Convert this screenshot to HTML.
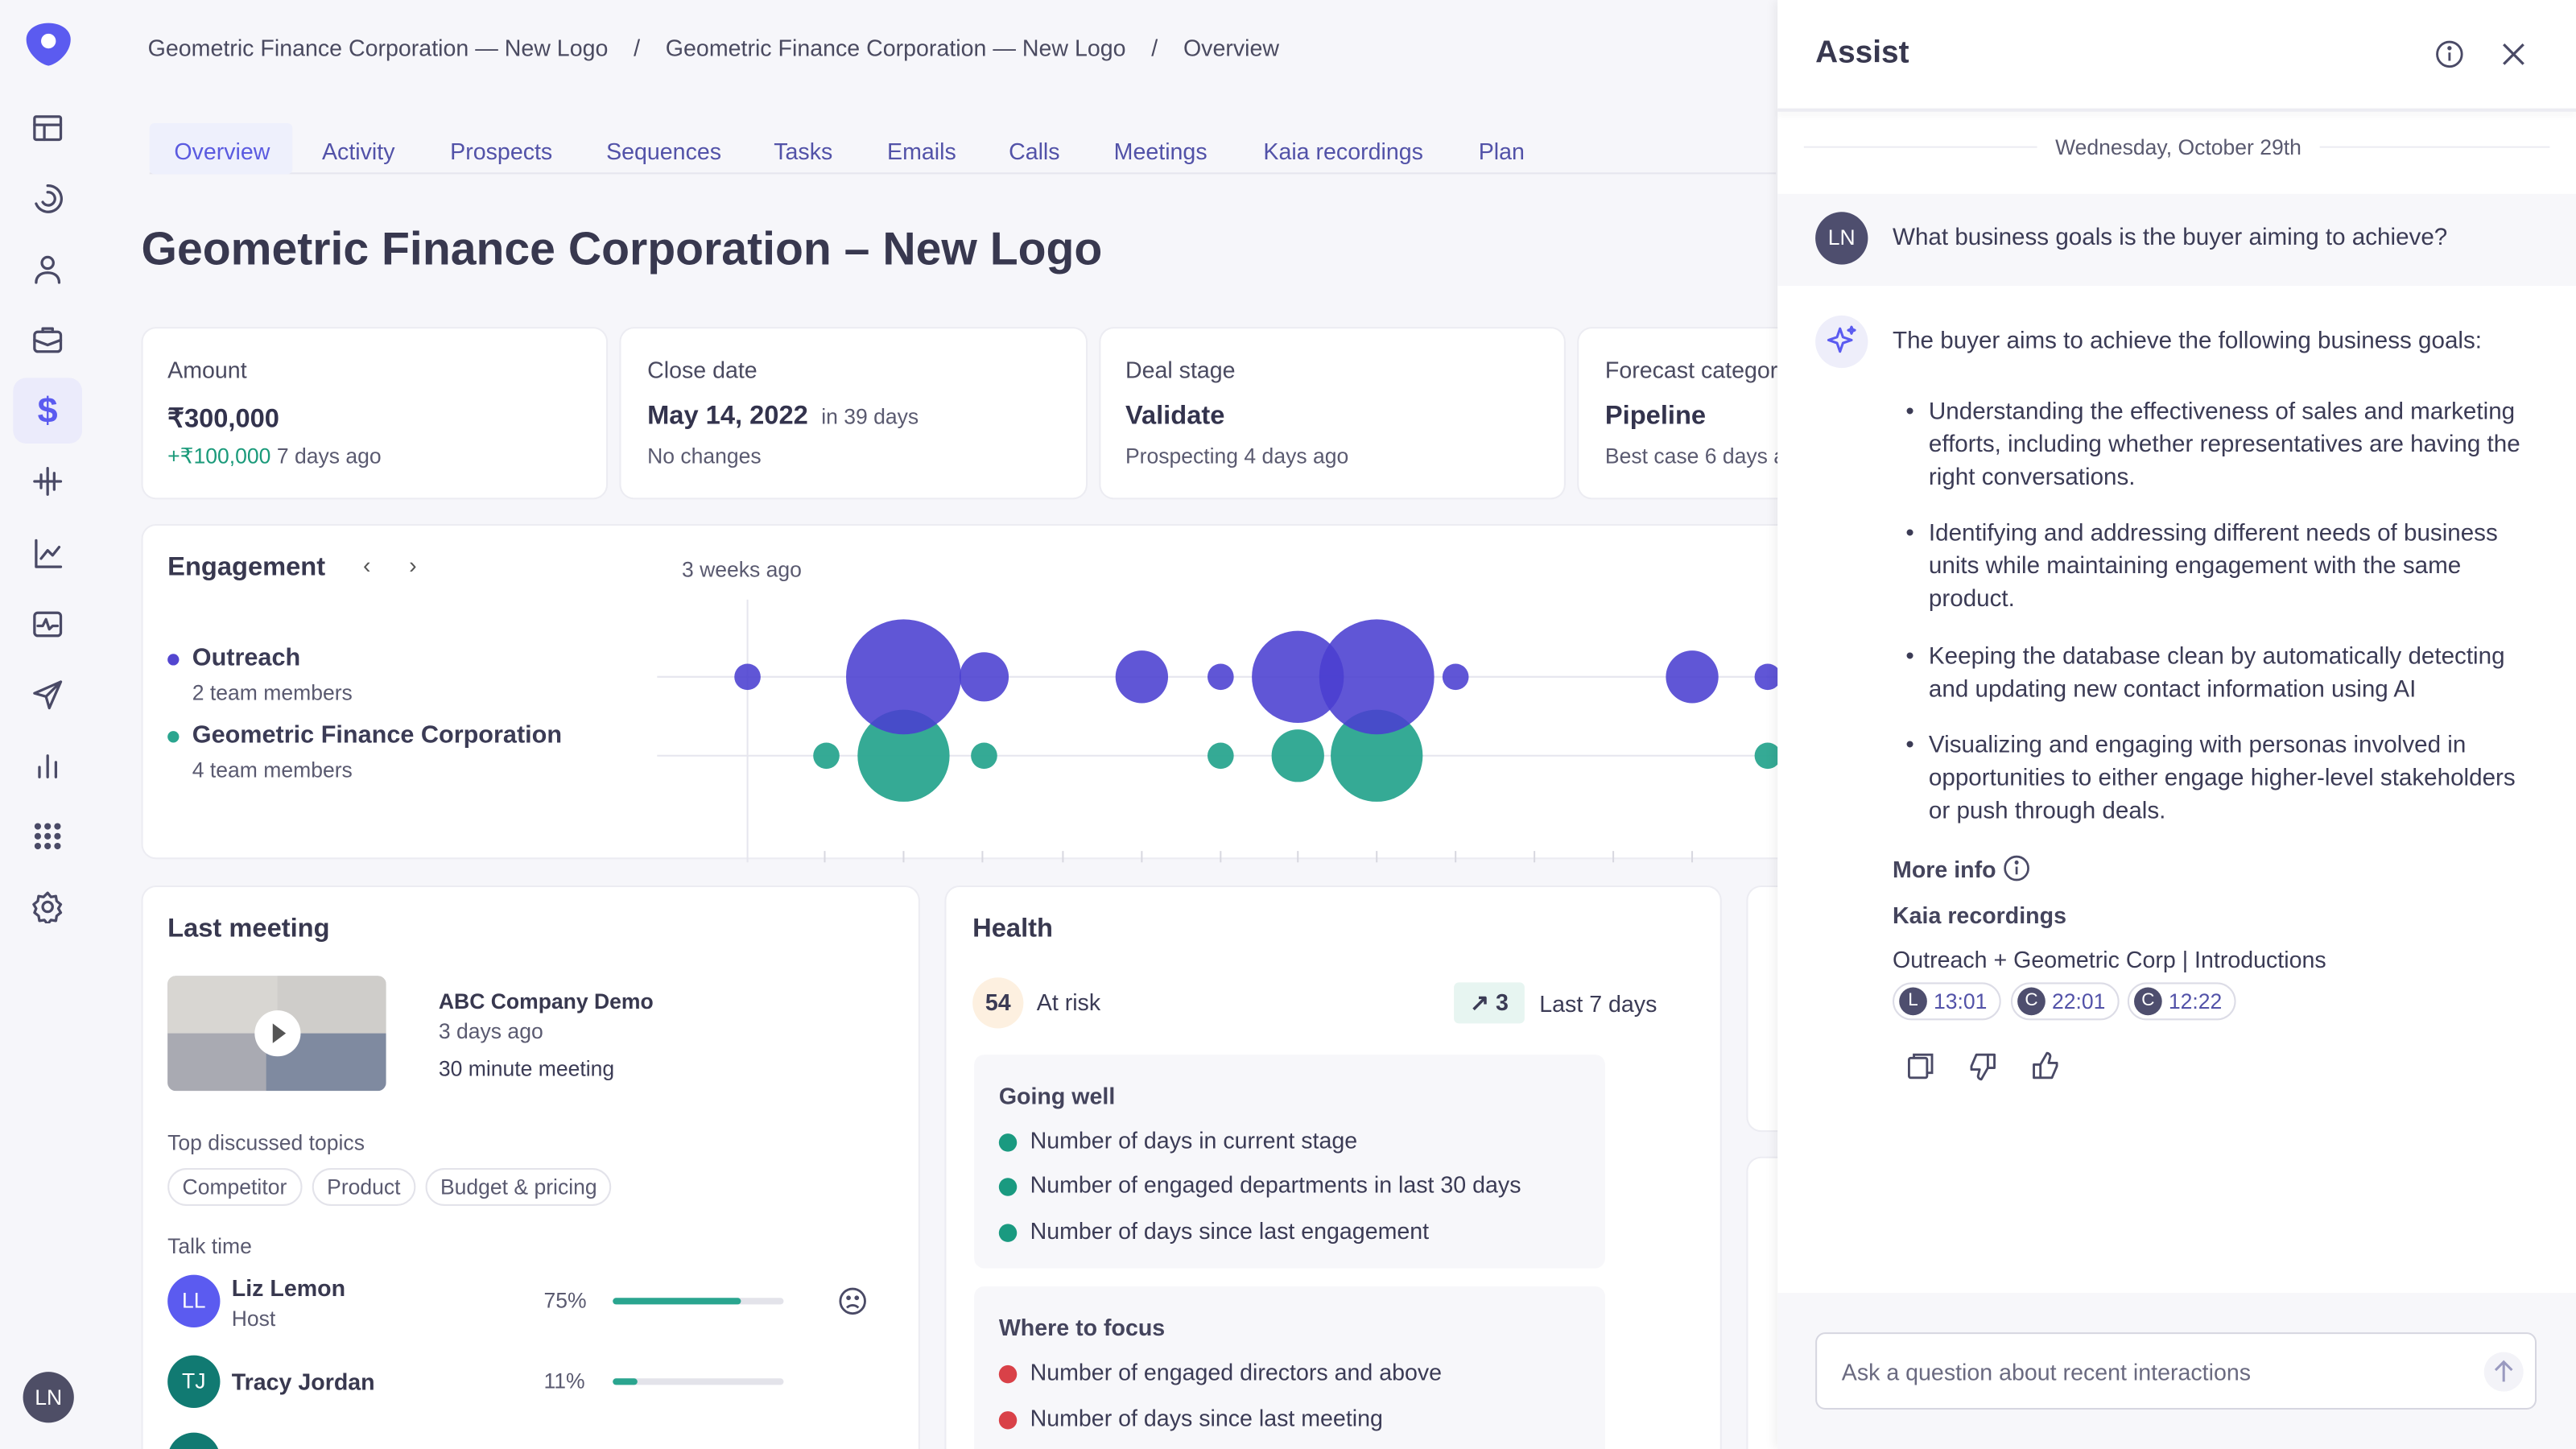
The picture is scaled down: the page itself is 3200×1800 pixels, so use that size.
<!DOCTYPE html>
<html><head><meta charset="utf-8"><style>
*{box-sizing:border-box;margin:0;padding:0}
body{width:3200px;height:1800px;overflow:hidden;background:#f6f6fa;font-family:"Liberation Sans",sans-serif;color:#3b3b55}
#w{position:absolute;left:0;top:0;width:1568px;height:882px;transform:scale(2.04082);transform-origin:0 0;overflow:hidden;background:#f6f6fa}
.a{position:absolute}
.card{position:absolute;background:#fff;border-radius:8px;box-shadow:0 0 0 1px #ececf2}
.ic{position:absolute;left:19px;width:20px;height:20px}
.ic svg{width:20px;height:20px;fill:none;stroke:#4a4a66;stroke-width:1.6;stroke-linecap:round;stroke-linejoin:round}
.tab{position:absolute;top:84px;font-size:14px;color:#5252a8}
.lbl{font-size:14px;color:#4a4a60}
.big{font-size:16px;font-weight:bold;color:#33334d}
.sm{font-size:13px;color:#5a5a70}
.dot{position:absolute;border-radius:50%}
.pill{position:absolute;border:1px solid #e3e3ea;border-radius:12px;font-size:13px;color:#5a5a70;height:23px;line-height:21px;padding:0 8px}
.li{position:absolute;font-size:14px;color:#3b3b55}
.li i{position:absolute;left:-19px;top:4px;width:11px;height:11px;border-radius:50%}
.chip{position:absolute;top:598px;height:23px;border:1px solid #dcdce6;border-radius:12px;font-size:13px;color:#5252a8;padding:0 7px 0 24px;line-height:21px}
.chip b{position:absolute;left:3px;top:2px;width:17px;height:17px;border-radius:50%;background:#4e4e6e;color:#fff;font-weight:normal;font-size:11px;text-align:center;line-height:17px}
</style></head><body><div id="w">
<!-- sidebar -->
<svg class="a" style="left:15px;top:13px" width="29" height="28" viewBox="0 0 29 28"><path d="M14.5 1C22 1 28 5 28 11c0 8-8 15-13.5 16C9 26 1 19 1 11 1 5 7 1 14.5 1z" fill="#5b5bf0"/><circle cx="14.5" cy="12" r="4.5" fill="#fff"/></svg>
<div class="ic" style="top:68px"><svg viewBox="0 0 20 20"><rect x="2" y="3" width="16" height="14" rx="1"/><path d="M2 8h16M8 8v9"/></svg></div>
<div class="ic" style="top:111px"><svg viewBox="0 0 20 20"><path d="M10 2a8 8 0 1 1-7 11M10 6a4 4 0 1 1-3 6"/></svg></div>
<div class="ic" style="top:154px"><svg viewBox="0 0 20 20"><circle cx="10" cy="6" r="3.5"/><path d="M3 18c0-4 3-6 7-6s7 2 7 6"/></svg></div>
<div class="ic" style="top:197px"><svg viewBox="0 0 20 20"><rect x="2" y="5" width="16" height="12" rx="2"/><path d="M7 5V3h6v2M2 10l8 3 8-3"/></svg></div>
<div class="a" style="left:8px;top:230px;width:42px;height:40px;background:#ebebfb;border-radius:8px;color:#5b5bf0;font-size:22px;font-weight:bold;text-align:center;line-height:40px">$</div>
<div class="ic" style="top:283px"><svg viewBox="0 0 20 20"><path d="M2 10h16M6 6v8M10 2v16M14 5v10"/></svg></div>
<div class="ic" style="top:327px"><svg viewBox="0 0 20 20"><path d="M3 2v16h15M6 13l4-5 3 3 4-5"/></svg></div>
<div class="ic" style="top:370px"><svg viewBox="0 0 20 20"><rect x="2" y="3" width="16" height="14" rx="2"/><path d="M4 11h3l2-4 2 6 2-2h3"/></svg></div>
<div class="ic" style="top:413px"><svg viewBox="0 0 20 20"><path d="M18 2L2 9l7 2 2 7z M9 11l9-9"/></svg></div>
<div class="ic" style="top:456px"><svg viewBox="0 0 20 20"><path d="M5 17V11M10 17V4M15 17V8"/></svg></div>
<div class="ic" style="top:499px"><svg viewBox="0 0 20 20" style="fill:#4a4a66;stroke:none"><circle cx="4" cy="4" r="2"/><circle cx="10" cy="4" r="2"/><circle cx="16" cy="4" r="2"/><circle cx="4" cy="10" r="2"/><circle cx="10" cy="10" r="2"/><circle cx="16" cy="10" r="2"/><circle cx="4" cy="16" r="2"/><circle cx="10" cy="16" r="2"/><circle cx="16" cy="16" r="2"/></svg></div>
<div class="ic" style="top:542px"><svg viewBox="0 0 20 20"><circle cx="10" cy="10" r="3"/><path d="M10 1.5l2 2.5 3-.5.5 3 2.5 2-1.5 2.5 1.5 2.5-2.5 2-.5 3-3-.5-2 2.5-2-2.5-3 .5-.5-3-2.5-2L3 11 1.5 8.5 4 6.5l.5-3 3 .5z"/></svg></div>
<div class="a" style="left:14px;top:835px;width:31px;height:31px;border-radius:50%;background:#4e4e66;color:#fff;font-size:13px;text-align:center;line-height:31px">LN</div>

<!-- breadcrumb -->
<div class="a" style="left:90px;top:21px;font-size:14px;color:#4a4a60;white-space:nowrap">Geometric Finance Corporation — New Logo &nbsp;&nbsp;&nbsp;/&nbsp;&nbsp;&nbsp; Geometric Finance Corporation — New Logo &nbsp;&nbsp;&nbsp;/&nbsp;&nbsp;&nbsp; Overview</div>
<!-- tabs -->
<div class="a" style="left:91px;top:105px;width:990px;height:1px;background:#e6e6ee"></div>
<div class="a" style="left:91px;top:75px;width:87px;height:31px;background:#eef0fc;border-radius:3px"></div>
<div class="tab" style="left:106px;color:#5b5be0">Overview</div>
<div class="tab" style="left:196px">Activity</div>
<div class="tab" style="left:274px">Prospects</div>
<div class="tab" style="left:369px">Sequences</div>
<div class="tab" style="left:471px">Tasks</div>
<div class="tab" style="left:540px">Emails</div>
<div class="tab" style="left:614px">Calls</div>
<div class="tab" style="left:678px">Meetings</div>
<div class="tab" style="left:769px">Kaia recordings</div>
<div class="tab" style="left:900px">Plan</div>
<div class="a" style="left:86px;top:136px;font-size:28px;font-weight:bold;color:#38384f;white-space:nowrap">Geometric Finance Corporation – New Logo</div>

<!-- stat cards -->
<div class="card" style="left:87px;top:200px;width:282px;height:103px"></div>
<div class="card" style="left:378px;top:200px;width:283px;height:103px"></div>
<div class="card" style="left:670px;top:200px;width:282px;height:103px"></div>
<div class="card" style="left:961px;top:200px;width:140px;height:103px"></div>
<div class="a lbl" style="left:102px;top:217px">Amount</div>
<div class="a big" style="left:102px;top:245px">₹300,000</div>
<div class="a sm" style="left:102px;top:270px"><span style="color:#1a9a7a">+₹100,000</span> 7 days ago</div>
<div class="a lbl" style="left:394px;top:217px">Close date</div>
<div class="a big" style="left:394px;top:245px">May 14, 2022 <span style="font-weight:normal;font-size:13px;color:#5a5a70">&nbsp;in 39 days</span></div>
<div class="a sm" style="left:394px;top:270px">No changes</div>
<div class="a lbl" style="left:685px;top:217px">Deal stage</div>
<div class="a big" style="left:685px;top:245px">Validate</div>
<div class="a sm" style="left:685px;top:270px">Prospecting 4 days ago</div>
<div class="a lbl" style="left:977px;top:217px;white-space:nowrap">Forecast category</div>
<div class="a big" style="left:977px;top:245px">Pipeline</div>
<div class="a sm" style="left:977px;top:270px;white-space:nowrap">Best case 6 days ago</div>

<!-- engagement -->
<div class="card" style="left:87px;top:320px;width:1010px;height:202px"></div>
<div class="a" style="left:102px;top:337px;font-size:16px;font-weight:bold;color:#38384f">Engagement</div>
<div class="a" style="left:221px;top:336px;font-size:14px;color:#555">‹</div>
<div class="a" style="left:249px;top:336px;font-size:14px;color:#555">›</div>
<div class="a sm" style="left:415px;top:339px">3 weeks ago</div>
<div class="dot" style="left:102px;top:398px;width:7px;height:7px;background:#5346d0"></div>
<div class="a" style="left:117px;top:392px;font-size:15px;font-weight:bold">Outreach</div>
<div class="a sm" style="left:117px;top:414px">2 team members</div>
<div class="dot" style="left:102px;top:445px;width:7px;height:7px;background:#2aa58f"></div>
<div class="a" style="left:117px;top:439px;font-size:15px;font-weight:bold;white-space:nowrap">Geometric Finance Corporation</div>
<div class="a sm" style="left:117px;top:461px">4 team members</div>
<svg class="a" style="left:390px;top:360px" width="700" height="165">
<line x1="10" y1="52" x2="700" y2="52" stroke="#e6e6ee"/><line x1="10" y1="100" x2="700" y2="100" stroke="#e6e6ee"/>
<line x1="65" y1="5" x2="65" y2="165" stroke="#e6e6ee"/>
<g stroke="#d8d8e0"><line x1="112" y1="158" x2="112" y2="165"/><line x1="160" y1="158" x2="160" y2="165"/><line x1="208" y1="158" x2="208" y2="165"/><line x1="257" y1="158" x2="257" y2="165"/><line x1="305" y1="158" x2="305" y2="165"/><line x1="353" y1="158" x2="353" y2="165"/><line x1="400" y1="158" x2="400" y2="165"/><line x1="448" y1="158" x2="448" y2="165"/><line x1="496" y1="158" x2="496" y2="165"/><line x1="544" y1="158" x2="544" y2="165"/><line x1="592" y1="158" x2="592" y2="165"/><line x1="640" y1="158" x2="640" y2="165"/></g>
<g fill="#2aa58f" fill-opacity=".95"><circle cx="113" cy="100" r="8"/><circle cx="160" cy="100" r="28"/><circle cx="209" cy="100" r="8"/><circle cx="353" cy="100" r="8"/><circle cx="400" cy="100" r="16"/><circle cx="448" cy="100" r="28"/><circle cx="686" cy="100" r="8"/></g>
<g fill="#4a3fd0" fill-opacity=".88"><circle cx="65" cy="52" r="8"/><circle cx="160" cy="52" r="35"/><circle cx="209" cy="52" r="15"/><circle cx="305" cy="52" r="16"/><circle cx="353" cy="52" r="8"/><circle cx="400" cy="52" r="28"/><circle cx="448" cy="52" r="35"/><circle cx="496" cy="52" r="8"/><circle cx="640" cy="52" r="16"/><circle cx="686" cy="52" r="8"/></g>
</svg>

<!-- last meeting -->
<div class="card" style="left:87px;top:540px;width:472px;height:360px"></div>
<div class="a" style="left:102px;top:557px;font-size:16px;font-weight:bold;color:#38384f">Last meeting</div>
<div class="a" style="left:102px;top:594px;width:133px;height:70px;border-radius:5px;overflow:hidden;background:#b9bcc4">
<div class="a" style="left:0;top:0;width:67px;height:35px;background:#d8d6d2"></div><div class="a" style="left:67px;top:0;width:66px;height:35px;background:#cfcdca"></div>
<div class="a" style="left:0;top:35px;width:60px;height:35px;background:#a9aab2"></div><div class="a" style="left:60px;top:35px;width:73px;height:35px;background:#7f8aa0"></div>
<div class="a" style="left:53px;top:21px;width:28px;height:28px;border-radius:50%;background:#fff"></div>
<div class="a" style="left:64px;top:29px;width:0;height:0;border-left:8px solid #555;border-top:6px solid transparent;border-bottom:6px solid transparent"></div></div>
<div class="a" style="left:267px;top:602px;font-size:13px;font-weight:bold;color:#38384f">ABC Company Demo</div>
<div class="a sm" style="left:267px;top:620px">3 days ago</div>
<div class="a" style="left:267px;top:643px;font-size:13px">30 minute meeting</div>
<div class="a sm" style="left:102px;top:688px">Top discussed topics</div>
<div class="pill" style="left:102px;top:711px">Competitor</div>
<div class="pill" style="left:190px;top:711px">Product</div>
<div class="pill" style="left:259px;top:711px">Budget &amp; pricing</div>
<div class="a sm" style="left:102px;top:751px">Talk time</div>
<div class="a" style="left:102px;top:776px;width:32px;height:32px;border-radius:50%;background:#5b5bf0;color:#fff;font-size:13px;text-align:center;line-height:32px">LL</div>
<div class="a" style="left:141px;top:776px;font-size:14px;font-weight:bold;color:#38384f">Liz Lemon</div>
<div class="a sm" style="left:141px;top:795px">Host</div>
<div class="a sm" style="left:331px;top:784px">75%</div>
<div class="a" style="left:373px;top:790px;width:104px;height:4px;background:#e3e3ea;border-radius:2px"><div style="width:78px;height:4px;background:#2aa58f;border-radius:2px"></div></div>
<svg class="a" style="left:510px;top:783px" width="18" height="18" viewBox="0 0 18 18" fill="none" stroke="#4a4a66" stroke-width="1.4"><circle cx="9" cy="9" r="7.5"/><circle cx="6.5" cy="7" r=".7" fill="#4a4a66"/><circle cx="11.5" cy="7" r=".7" fill="#4a4a66"/><path d="M5.5 13c2-2 5-2 7 0"/></svg>
<div class="a" style="left:102px;top:825px;width:32px;height:32px;border-radius:50%;background:#117a72;color:#fff;font-size:13px;text-align:center;line-height:32px">TJ</div>
<div class="a" style="left:141px;top:833px;font-size:14px;font-weight:bold;color:#38384f">Tracy Jordan</div>
<div class="a sm" style="left:331px;top:833px">11%</div>
<div class="a" style="left:373px;top:839px;width:104px;height:4px;background:#e3e3ea;border-radius:2px"><div style="width:15px;height:4px;background:#2aa58f;border-radius:2px"></div></div>
<div class="a" style="left:102px;top:872px;width:32px;height:32px;border-radius:50%;background:#117a72"></div>

<!-- health -->
<div class="card" style="left:576px;top:540px;width:471px;height:360px"></div>
<div class="a" style="left:592px;top:557px;font-size:16px;font-weight:bold;color:#38384f">Health</div>
<div class="a" style="left:592px;top:595px;width:31px;height:31px;border-radius:50%;background:#fdf0e0;font-size:14px;font-weight:bold;text-align:center;line-height:31px">54</div>
<div class="a" style="left:631px;top:602px;font-size:14px">At risk</div>
<div class="a" style="left:885px;top:598px;width:43px;height:25px;background:#e7f5f1;border-radius:3px;font-size:14px;font-weight:bold;text-align:center;line-height:25px">↗ 3</div>
<div class="a" style="left:937px;top:603px;font-size:14px">Last 7 days</div>
<div class="a" style="left:593px;top:642px;width:384px;height:130px;background:#f7f7fa;border-radius:6px"></div>
<div class="a" style="left:608px;top:659px;font-size:14px;font-weight:bold;color:#44445c">Going well</div>
<div class="li" style="left:627px;top:686px"><i style="background:#1a9a80"></i>Number of days in current stage</div>
<div class="li" style="left:627px;top:713px"><i style="background:#1a9a80"></i>Number of engaged departments in last 30 days</div>
<div class="li" style="left:627px;top:741px"><i style="background:#1a9a80"></i>Number of days since last engagement</div>
<div class="a" style="left:593px;top:783px;width:384px;height:110px;background:#f7f7fa;border-radius:6px"></div>
<div class="a" style="left:608px;top:800px;font-size:14px;font-weight:bold;color:#44445c">Where to focus</div>
<div class="li" style="left:627px;top:827px"><i style="background:#d94148"></i>Number of engaged directors and above</div>
<div class="li" style="left:627px;top:855px"><i style="background:#d94148"></i>Number of days since last meeting</div>
<div class="card" style="left:1064px;top:540px;width:40px;height:148px"></div>
<div class="card" style="left:1064px;top:705px;width:40px;height:200px"></div>

<!-- assist panel -->
<div class="a" style="left:1082px;top:0;width:486px;height:882px;background:#fff;box-shadow:-2px 0 6px rgba(0,0,0,.06)"></div>
<div class="a" style="left:1082px;top:66px;width:486px;height:2px;background:#ececf2;box-shadow:0 2px 4px rgba(0,0,0,.06)"></div>
<div class="a" style="left:1105px;top:22px;font-size:19px;font-weight:bold;color:#38384f">Assist</div>
<svg class="a" style="left:1482px;top:24px" width="18" height="18" viewBox="0 0 18 18" fill="none" stroke="#4a4a66" stroke-width="1.4"><circle cx="9" cy="9" r="7.5"/><path d="M9 8v5"/><circle cx="9" cy="5.3" r=".6" fill="#4a4a66"/></svg>
<svg class="a" style="left:1523px;top:26px" width="14" height="14" viewBox="0 0 14 14" stroke="#4a4a66" stroke-width="1.6"><path d="M1 1l12 12M13 1L1 13"/></svg>
<div class="a" style="left:1098px;top:89px;width:454px;height:1px;background:#ececf2"></div>
<div class="a" style="left:1240px;top:82px;padding:0 11px;background:#fff;font-size:13px;color:#5a5a70">Wednesday, October 29th</div>
<div class="a" style="left:1082px;top:118px;width:486px;height:56px;background:#f7f7fa"></div>
<div class="a" style="left:1105px;top:129px;width:32px;height:32px;border-radius:50%;background:#4e4e6e;color:#fff;font-size:13px;text-align:center;line-height:32px">LN</div>
<div class="a" style="left:1152px;top:137px;font-size:14.5px">What business goals is the buyer aiming to achieve?</div>
<div class="a" style="left:1105px;top:192px;width:32px;height:32px;border-radius:50%;background:#eeeefa"></div>
<svg class="a" style="left:1110px;top:197px" width="22" height="22" viewBox="0 0 22 22" fill="none" stroke="#5b5bf0" stroke-width="1.5" stroke-linejoin="round"><path d="M10 3l1.8 5.2L17 10l-5.2 1.8L10 17l-1.8-5.2L3 10l5.2-1.8z"/><path d="M17 2l.6 1.4L19 4l-1.4.6L17 6l-.6-1.4L15 4l1.4-.6z"/></svg>
<div class="a" style="left:1152px;top:200px;font-size:14.5px">The buyer aims to achieve the following business goals:</div>
<div class="a" style="left:1174px;top:242px;width:370px;font-size:14.5px;line-height:19.8px">
<div style="position:relative;margin-bottom:15px"><span style="position:absolute;left:-14px">•</span>Understanding the effectiveness of sales and marketing efforts, including whether representatives are having the right conversations.</div>
<div style="position:relative;margin-bottom:15px"><span style="position:absolute;left:-14px">•</span>Identifying and addressing different needs of business units while maintaining engagement with the same product.</div>
<div style="position:relative;margin-bottom:15px"><span style="position:absolute;left:-14px">•</span>Keeping the database clean by automatically detecting and updating new contact information using AI</div>
<div style="position:relative"><span style="position:absolute;left:-14px">•</span>Visualizing and engaging with personas involved in opportunities to either engage higher-level stakeholders or push through deals.</div></div>
<div class="a" style="left:1152px;top:521px;font-size:14px;font-weight:bold;color:#44445c">More info</div>
<svg class="a" style="left:1219px;top:520px" width="17" height="17" viewBox="0 0 18 18" fill="none" stroke="#4a4a66" stroke-width="1.4"><circle cx="9" cy="9" r="7.5"/><path d="M9 8v5"/><circle cx="9" cy="5.3" r=".6" fill="#4a4a66"/></svg>
<div class="a" style="left:1152px;top:549px;font-size:14px;font-weight:bold;color:#44445c">Kaia recordings</div>
<div class="a" style="left:1152px;top:576px;font-size:14px">Outreach + Geometric Corp | Introductions</div>
<div class="chip" style="left:1152px"><b>L</b>13:01</div>
<div class="chip" style="left:1224px"><b>C</b>22:01</div>
<div class="chip" style="left:1295px"><b>C</b>12:22</div>
<svg class="a" style="left:1160px;top:640px" width="18" height="18" viewBox="0 0 18 18" fill="none" stroke="#4a4a66" stroke-width="1.4"><rect x="2" y="4" width="11" height="12" rx="1"/><path d="M5 4V2h11v11h-3"/></svg>
<svg class="a" style="left:1198px;top:640px" width="18" height="18" viewBox="0 0 18 18" fill="none" stroke="#4a4a66" stroke-width="1.4" stroke-linejoin="round"><path d="M12 2H5L2 9v2h5l-1 4c0 1 1 2 2 2l4-7V2zM12 2h4v8h-4"/></svg>
<svg class="a" style="left:1236px;top:640px" width="18" height="18" viewBox="0 0 18 18" fill="none" stroke="#4a4a66" stroke-width="1.4" stroke-linejoin="round"><path d="M6 16h7l3-7V7h-5l1-4c0-1-1-2-2-2L6 8v8zM6 16H2V8h4"/></svg>
<div class="a" style="left:1082px;top:787px;width:486px;height:95px;background:#f7f7fa"></div>
<div class="a" style="left:1105px;top:811px;width:439px;height:47px;background:#fff;border:1px solid #d6d6e0;border-radius:6px"></div>
<div class="a" style="left:1121px;top:827px;font-size:14px;color:#6a6a80">Ask a question about recent interactions</div>
<div class="a" style="left:1512px;top:823px;width:24px;height:24px;border-radius:50%;background:#f3f3f8"></div>
<svg class="a" style="left:1516px;top:827px" width="16" height="16" viewBox="0 0 16 16" fill="none" stroke="#9a9ac0" stroke-width="1.5"><path d="M8 14V2M3 7l5-5 5 5"/></svg>
</div></body></html>
